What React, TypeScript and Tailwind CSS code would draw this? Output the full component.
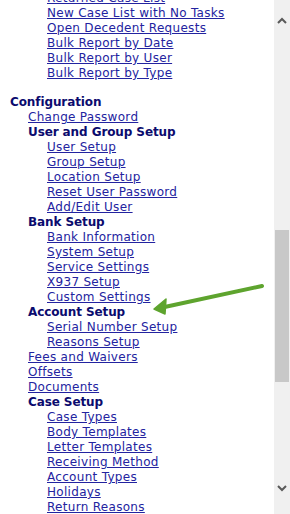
import React from "react";

type Item = { t: string; level: number; kind: "link" | "head" | "blank" };

const items: Item[] = [
  { t: "Returned Case List", level: 2, kind: "link" },
  { t: "New Case List with No Tasks", level: 2, kind: "link" },
  { t: "Open Decedent Requests", level: 2, kind: "link" },
  { t: "Bulk Report by Date", level: 2, kind: "link" },
  { t: "Bulk Report by User", level: 2, kind: "link" },
  { t: "Bulk Report by Type", level: 2, kind: "link" },
  { t: "", level: 0, kind: "blank" },
  { t: "Configuration", level: 0, kind: "head" },
  { t: "Change Password", level: 1, kind: "link" },
  { t: "User and Group Setup", level: 1, kind: "head" },
  { t: "User Setup", level: 2, kind: "link" },
  { t: "Group Setup", level: 2, kind: "link" },
  { t: "Location Setup", level: 2, kind: "link" },
  { t: "Reset User Password", level: 2, kind: "link" },
  { t: "Add/Edit User", level: 2, kind: "link" },
  { t: "Bank Setup", level: 1, kind: "head" },
  { t: "Bank Information", level: 2, kind: "link" },
  { t: "System Setup", level: 2, kind: "link" },
  { t: "Service Settings", level: 2, kind: "link" },
  { t: "X937 Setup", level: 2, kind: "link" },
  { t: "Custom Settings", level: 2, kind: "link" },
  { t: "Account Setup", level: 1, kind: "head" },
  { t: "Serial Number Setup", level: 2, kind: "link" },
  { t: "Reasons Setup", level: 2, kind: "link" },
  { t: "Fees and Waivers", level: 1, kind: "link" },
  { t: "Offsets", level: 1, kind: "link" },
  { t: "Documents", level: 1, kind: "link" },
  { t: "Case Setup", level: 1, kind: "head" },
  { t: "Case Types", level: 2, kind: "link" },
  { t: "Body Templates", level: 2, kind: "link" },
  { t: "Letter Templates", level: 2, kind: "link" },
  { t: "Receiving Method", level: 2, kind: "link" },
  { t: "Account Types", level: 2, kind: "link" },
  { t: "Holidays", level: 2, kind: "link" },
  { t: "Return Reasons", level: 2, kind: "link" },
];

const padFor = (l: number) => (l === 0 ? "pl-[10px]" : l === 1 ? "pl-[28px]" : "pl-[47px]");

export default function App() {
  return (
    <div className="relative w-[290px] h-[514px] overflow-hidden bg-white flex" style={{ fontFamily: '"DejaVu Sans", Verdana, sans-serif' }}>
      <div className="flex-1 overflow-hidden">
        <div className="-mt-[9px] flex flex-col text-[12px] leading-[15px]">
          {items.map((it, i) =>
            it.kind === "blank" ? (
              <div key={i} className="h-[14px]" />
            ) : it.kind === "head" ? (
              <div key={i} className={`${padFor(it.level)} font-bold tracking-[-0.1px] text-[#0b0b6e] whitespace-nowrap`}>
                {it.t}
              </div>
            ) : (
              <div key={i} className={`${padFor(it.level)} whitespace-nowrap`}>
                <a href="#" className="underline tracking-[0.3px] text-[#2323a0]">
                  {it.t}
                </a>
              </div>
            )
          )}
        </div>
      </div>
      <div className="w-[16px] h-full bg-[#f0f0f0] flex flex-col items-center">
        <div className="h-[34px] flex items-center justify-center pt-[6px]">
          <svg width="10" height="7" viewBox="0 0 10 7">
            <path d="M1 6 L5 2 L9 6" fill="none" stroke="#5a5a5a" strokeWidth="2" />
          </svg>
        </div>
        <div className="mt-[196px] w-[14px] h-[152px] bg-[#c8c8c8]" />
        <div className="flex-1" />
        <div className="h-[34px] flex items-start justify-center pt-[5px]">
          <svg width="10" height="7" viewBox="0 0 10 7">
            <path d="M1 1 L5 5 L9 1" fill="none" stroke="#5a5a5a" strokeWidth="2" />
          </svg>
        </div>
      </div>
      <svg className="absolute left-0 top-0 pointer-events-none" width="290" height="514" viewBox="0 0 290 514">
        <line x1="262" y1="286" x2="160" y2="308" stroke="#5ea42e" strokeWidth="4" strokeLinecap="round" />
        <path d="M154 309 L166 299 L165 314 Z" fill="#5ea42e" stroke="#5ea42e" strokeWidth="1.5" strokeLinejoin="round" />
      </svg>
    </div>
  );
}
